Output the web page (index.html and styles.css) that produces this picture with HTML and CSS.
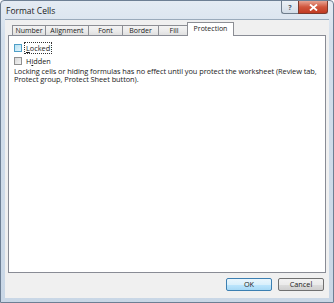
FILE: index.html
```html
<!DOCTYPE html>
<html lang="en">
<head>
  <meta charset="UTF-8" />
  <title>Format Cells</title>
  <link rel="stylesheet" href="styles.css">
</head>
<body>
  <div class="window">
    <div class="titlebar">
      <span class="title">Format Cells</span>
      <div class="caption-buttons">
        <div class="cap-btn help">?</div>
        <div class="cap-btn close">
          <svg width="9" height="7" viewBox="0 0 9 7"><path d="M1 0.5 L8 6.5 M8 0.5 L1 6.5" stroke="#fff" stroke-width="1.8"/></svg>
        </div>
      </div>
    </div>

    <div class="client">
      <div class="tabs">
        <div class="tab w-number">Number</div>
        <div class="tab w-align">Alignment</div>
        <div class="tab w-font">Font</div>
        <div class="tab w-border">Border</div>
        <div class="tab w-fill">Fill</div>
        <div class="tab active w-protect">Protection</div>
      </div>
      <div class="panel">
        <div class="check-row">
          <span class="box focus"></span>
          <span class="label focused"><u>L</u>ocked</span>
        </div>
        <div class="check-row">
          <span class="box"></span>
          <span class="label">H<u>i</u>dden</span>
        </div>
        <p class="note">Locking cells or hiding formulas has no effect until you protect the worksheet (Review tab, Protect group, Protect Sheet button).</p>
      </div>
      <div class="buttons">
        <div class="btn default">OK</div>
        <div class="btn">Cancel</div>
      </div>
    </div>
  </div>
</body>
</html>
```

FILE: styles.css
```css
body {
  margin: 0;
  background: #fff;
  font-family: "Open Sans", "Noto Sans", sans-serif;
  color: #1a1a1a;
}
.window {
  width: 334px;
  height: 303px;
  box-sizing: border-box;
  border: 1px solid #6d7f94;
  border-radius: 4px 4px 0 0;
  background: linear-gradient(#e4ebf3, #d3dfec 40px, #c9d7e6);
  padding: 0 4px 4px 4px;
  display: flex;
  flex-direction: column;
}
.titlebar {
  height: 18px;
  display: flex;
  align-items: flex-start;
  justify-content: space-between;
}
.title {
  font-size: 8.5px;
  margin: 4px 0 0 1px;
  color: #1b1b1b;
}
.caption-buttons {
  display: flex;
  margin-right: 1px;
}
.cap-btn {
  height: 12px;
  border: 1px solid #6f7d8c;
  border-top: none;
  display: flex;
  align-items: center;
  justify-content: center;
}
.help {
  width: 16px;
  border-radius: 0 0 0 3px;
  border-right: none;
  background: linear-gradient(#eef2f6, #d2dce7);
  color: #4a5a6c;
  font-size: 7px;
  font-weight: bold;
}
.close {
  width: 28px;
  border-radius: 0 0 3px 0;
  background: linear-gradient(#e8a493, #d0553c 50%, #c13a23);
  border-color: #7d3a2e;
}
.client {
  flex: 1;
  background: #f0f0f0;
  border-top: 1px solid #9aaabb;
  padding: 2px 3px 0 3px;
  display: flex;
  flex-direction: column;
}
.tabs {
  display: flex;
  align-items: flex-end;
  padding-left: 4px;
  height: 14px;
  margin-bottom: -1px;
}
.tab {
  height: 10px;
  border: 1px solid #8c8e94;
  border-bottom: none;
  margin-right: -1px;
  background: linear-gradient(#f3f3f3, #ebebeb 50%, #dddddd);
  font-size: 7px;
  line-height: 10px;
  text-align: center;
  box-sizing: content-box;
}
.tab.active {
  height: 13px;
  background: #fff;
  margin-left: -2px;
  margin-right: 0;
  position: relative;
  z-index: 1;
  line-height: 12px;
}
.w-number { width: 32px; }
.w-align { width: 42px; }
.w-font { width: 33px; }
.w-border { width: 35px; }
.w-fill { width: 30px; }
.w-protect { width: 45px; }
.panel {
  height: 238px;
  box-sizing: border-box;
  border: 1px solid #898c95;
  background: #fff;
  padding: 5px 3px 0 5px;
}
.check-row {
  display: flex;
  align-items: center;
  height: 13px;
  font-size: 7.3px;
}
.box {
  width: 6px;
  height: 6px;
  border: 1px solid #8f8f8f;
  background: linear-gradient(135deg, #d8d8d8, #f4f4f4);
  margin-right: 3px;
}
.box.focus {
  border-color: #4f9fc7;
  background: linear-gradient(135deg, #b7e1f2, #e4f5fc);
}
.label {
  padding: 0 1px;
  line-height: 10px;
}
.label.focused {
  outline: 1px dotted #333;
}
.note {
  margin: 0;
  font-size: 7.4px;
  letter-spacing: -0.06px;
  line-height: 8px;
}
.buttons {
  display: flex;
  justify-content: flex-end;
  gap: 6px;
  padding: 5px 2px 0 0;
}
.btn {
  width: 44px;
  height: 11px;
  border: 1px solid #707070;
  border-radius: 2px;
  background: linear-gradient(#f2f2f2, #ebebeb 50%, #dddddd 51%, #cfcfcf);
  font-size: 7.3px;
  line-height: 11px;
  text-align: center;
}
.btn.default {
  border-color: #3c7fb1;
  background: linear-gradient(#eaf6fd, #d9f0fc 50%, #bee6fd 51%, #a7d9f5);
}
```
